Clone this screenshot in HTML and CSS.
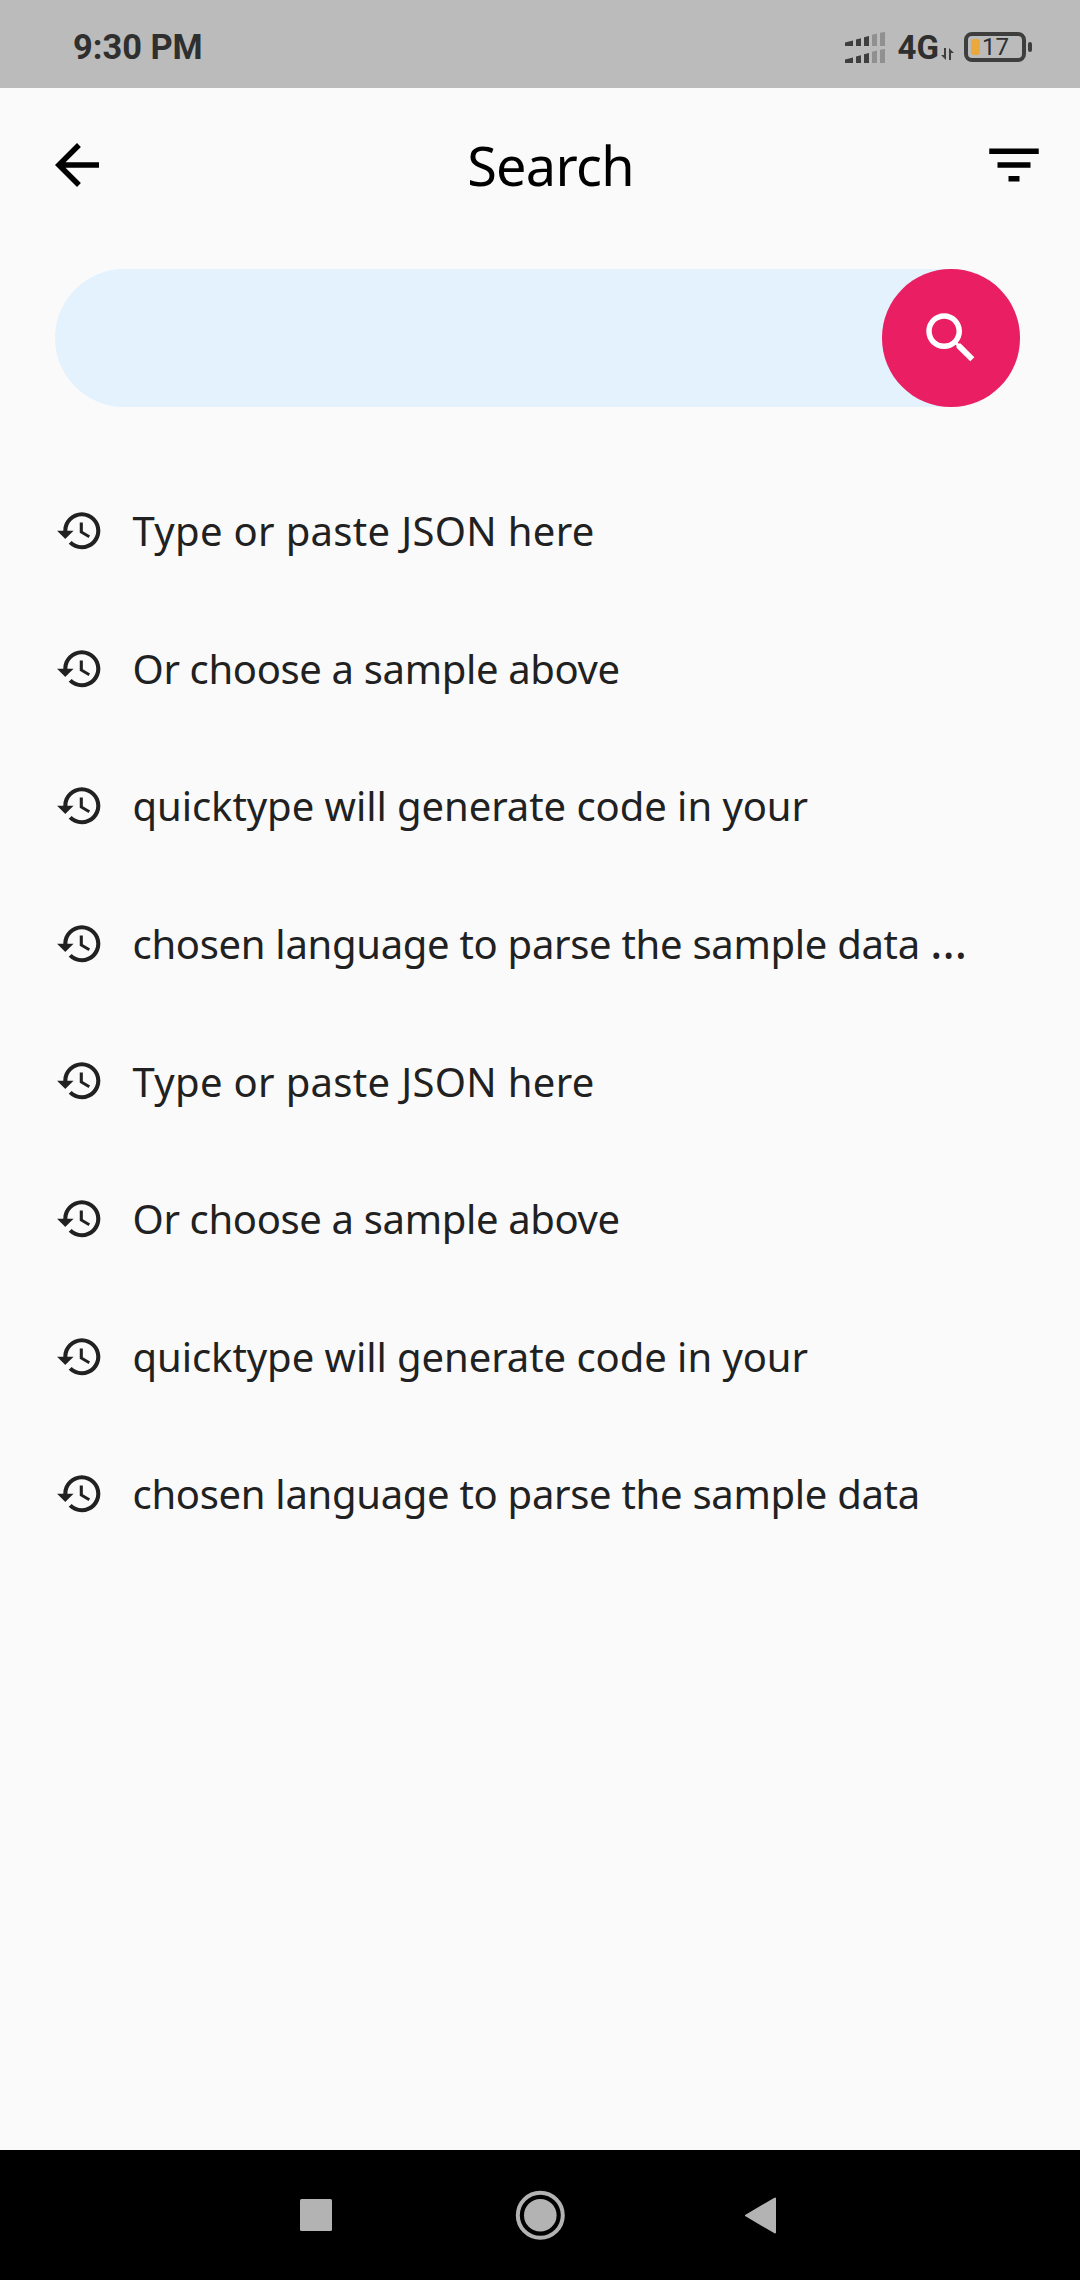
FILE: index.html
```
<!DOCTYPE html>
<html lang="en">
<head>
<meta charset="utf-8">
<title>Search</title>
<link rel="stylesheet" href="styles.css">
</head>
<body>
<svg width="0" height="0" class="defs" aria-hidden="true">
  <symbol id="history" viewBox="0 0 24 24"><path d="M13 3c-4.97 0-9 4.03-9 9H1l3.89 3.89.07.14L9 12H6c0-3.87 3.13-7 7-7s7 3.13 7 7-3.13 7-7 7c-1.93 0-3.68-.79-4.94-2.06l-1.42 1.42C8.27 19.99 10.51 21 13 21c4.97 0 9-4.03 9-9s-4.03-9-9-9zm-1 5v5l4.28 2.54.72-1.21-3.5-2.08V8H12z"/></symbol>
</svg>
<div class="screen">
  <header class="status">
    <span class="time">9:30 PM</span>
    <svg class="signal" width="40" height="32" viewBox="0 0 40 32">
      <g fill="#3d3e3d"><path d="M0 10.5l8-2V14H0zM11 7.5l5-1.3V14h-5zM19 5.2l5-1.3V14h-5z"/><path d="M0 27.500l8-2V31H0zM11 24.500l5-1.300V31h-5zM19 22.200l5-1.300V31h-5z"/></g>
      <g fill="#909090"><path d="M27 2.800l5-1.300V14h-5zM35 .8l5-.8V14h-5z"/><path d="M27 19.800l5-1.300V31h-5zM35 17.800l5-.8V31h-5z"/></g>
    </svg>
    <span class="network">4G</span>
    <svg class="data" width="13" height="12" viewBox="0 0 13 12"><path d="M5 0v12L0 7h3V0zM8 12V0l5 5h-3v7z" fill="#3d3e3d"/></svg>
    <span class="battery"><i class="charge"></i><span>17</span></span>
    <i class="cap"></i>
  </header>
  <nav class="appbar">
    <svg class="icon" viewBox="0 0 24 24"><path d="M20 11H7.830l5.590-5.590L12 4l-8 8 8 8 1.410-1.410L7.830 13H20v-2z"/></svg>
    <h1>Search</h1>
    <svg class="icon" viewBox="0 0 24 24"><path d="M10 18h4v-2h-4v2zM3 6v2h18V6H3zm3 7h12v-2H6v2z"/></svg>
  </nav>
  <div class="search">
    <button class="go" aria-label="Search"><svg class="icon" viewBox="0 0 24 24"><path d="M15.500 14h-.790l-.280-.270C15.410 12.590 16 11.110 16 9.500 16 5.910 13.090 3 9.500 3S3 5.910 3 9.500 5.910 16 9.500 16c1.610 0 3.090-.590 4.230-1.570l.270.280v.790l5 4.990L20.490 19l-4.990-5zm-6 0C7.010 14 5 11.990 5 9.500S7.010 5 9.500 5 14 7.010 14 9.500 11.990 14 9.500 14z"/></svg></button>
  </div>
  <ul class="list">
    <li><svg><use href="#history"/></svg><span class="type">Type or paste JSON here</span></li>
    <li><svg><use href="#history"/></svg><span class="or">Or choose a sample above</span></li>
    <li><svg><use href="#history"/></svg><span class="quick">quicktype will generate code in your</span></li>
    <li><svg><use href="#history"/></svg><span class="chosen">chosen language to parse the sample data <span class="more">…</span></span></li>
    <li><svg><use href="#history"/></svg><span class="type">Type or paste JSON here</span></li>
    <li><svg><use href="#history"/></svg><span class="or">Or choose a sample above</span></li>
    <li><svg><use href="#history"/></svg><span class="quick">quicktype will generate code in your</span></li>
    <li><svg><use href="#history"/></svg><span class="chosen">chosen language to parse the sample data</span></li>
  </ul>
  <footer class="navbar">
    <svg width="480" height="52" viewBox="0 0 480 52" fill="#b3b3b3"><rect x="0" y="9" width="32" height="32" rx="1.500"/><circle cx="240.300" cy="25.300" r="16.300"/><circle cx="240.300" cy="25.300" r="22.500" fill="none" stroke="#b3b3b3" stroke-width="4"/><path d="M446 25.500l29-17v34z" stroke="#b3b3b3" stroke-width="2" stroke-linejoin="round"/></svg>
  </footer>
</div>
</body>
</html>
```
FILE: styles.css
```
* { box-sizing: border-box; }
body { margin: 0; background: #fafafa; color: #212121; font-family: "Noto Sans", sans-serif; }
.defs { position: absolute; }
.screen { width: 1080px; height: 2280px; display: flex; flex-direction: column; }
.status { height: 88px; background: #bbb; display: flex; align-items: center; padding: 6px 48px 0 73px; font-family: Roboto, sans-serif; font-weight: 700; color: #2e2f2e; }
.time { font-size: 34.4px; margin-right: auto; }
.signal { margin-top: 1px; }
.network { font-size: 33px; margin-left: 13px; }
.data { margin: 14px 0 0 2px; }
.battery { width: 62px; height: 30px; margin-left: 10px; border: 4px solid #3d3e3d; border-radius: 8px; display: flex; align-items: center; font-size: 24px; font-weight: 400; padding-left: 3px; gap: 2px; }
.charge { width: 9px; height: 16px; border-radius: 3px; background: #eba83d; }
.cap { width: 4px; height: 10px; border-radius: 2px; background: #3d3e3d; margin-left: 2px; }
.appbar { height: 154px; display: flex; align-items: center; justify-content: space-between; padding: 0 33px 0 44px; }
.icon { width: 66px; height: 66px; display: block; fill: #000; }
h1 { margin: 0; padding-left: 10px; font-size: 54px; font-weight: 400; letter-spacing: -0.7px; color: #000; }
.search { margin: 27.3px 60.5px 55.2px 55px; height: 137.5px; border-radius: 69px; background: #e3f2fd; display: flex; justify-content: flex-end; }
.go { width: 137.5px; height: 137.5px; border: 0; border-radius: 50%; background: #e91e63; padding: 0; display: flex; align-items: center; justify-content: center; }
.go .icon { fill: #fff; }
.list { margin: 0; padding: 0 0 0 55px; list-style: none; }
.list li { height: 137.6px; display: flex; align-items: center; gap: 28px; font-size: 40px; white-space: nowrap; }
.list svg { width: 49.5px; height: 49.5px; fill: #212121; }
.type { letter-spacing: 0.33px; }
.or { letter-spacing: -0.35px; }
.quick { letter-spacing: -0.06px; }
.chosen { letter-spacing: -0.3px; }
.more { font-size: 47px; line-height: 0; }
.navbar { height: 130px; margin-top: auto; padding-top: 2px; background: #000; display: flex; align-items: center; justify-content: center; }
```
